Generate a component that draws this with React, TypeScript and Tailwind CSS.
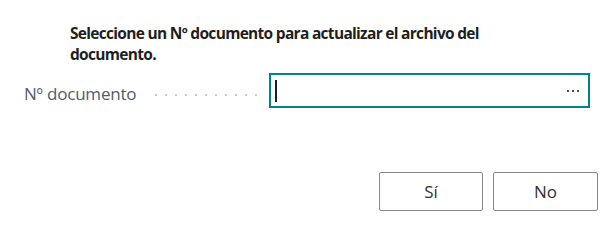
import React from "react";

export default function App() {
  return (
    <div className="w-[611px] h-[241px] bg-white flex flex-col" style={{ fontFamily: '"Open Sans", "Noto Sans", sans-serif' }}>
      <div className="pl-[70px] pt-[23px]">
        <p className="text-[15.5px] leading-[21px] font-bold tracking-[-0.7px] text-[#1f1f1f] w-[470px]">
          Seleccione un Nº documento para actualizar el archivo del documento.
        </p>
      </div>
      <div className="flex items-center mt-[8px] pl-[24px]">
        <span className="text-[17px] tracking-[-0.2px] text-[#505c6d] whitespace-nowrap w-[131px] pt-[6px]">Nº documento</span>
        <div className="flex items-center gap-[8px] w-[104px] h-[2px] mt-[8px]">
          {Array.from({ length: 11 }).map((_, i) => (
            <span key={i} className="w-[2px] h-[2px] bg-[#cdcdcd]" />
          ))}
        </div>
        <div className="ml-[10px] w-[321px] h-[35px] border-2 border-[#008489] flex items-center justify-between pl-[4px] pr-[9px]">
          <span className="w-[2px] h-[22px] bg-[#202020]" />
          <span className="flex gap-[3px] items-center">
            <span className="w-[2px] h-[2px] bg-[#505050]" />
            <span className="w-[2px] h-[2px] bg-[#505050]" />
            <span className="w-[2px] h-[2px] bg-[#505050]" />
          </span>
        </div>
      </div>
      <div className="flex justify-end gap-[10px] pr-[13px] mt-[64px]">
        <button className="w-[104px] h-[39px] border border-[#8a8886] rounded-[2px] text-[17px] text-[#323130] bg-white">Sí</button>
        <button className="w-[105px] h-[39px] border border-[#8a8886] rounded-[2px] text-[17px] text-[#323130] bg-white">No</button>
      </div>
    </div>
  );
}
